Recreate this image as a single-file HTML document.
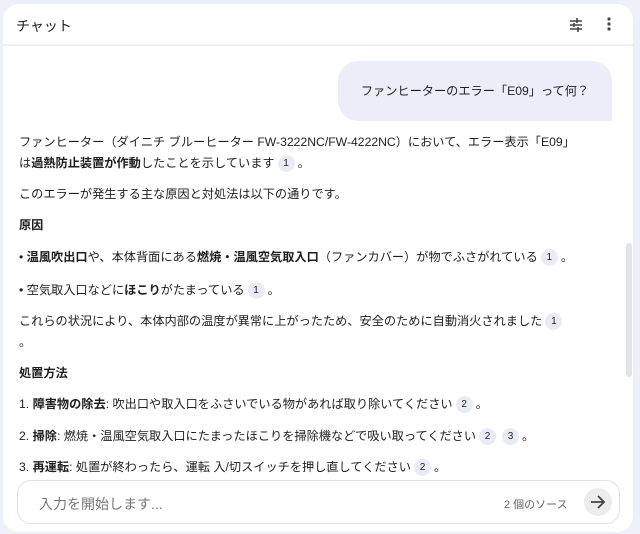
<!DOCTYPE html>
<html><head><meta charset="utf-8"><style>
*{margin:0;padding:0;box-sizing:border-box}
body{width:640px;height:534px;background:#eef0f9;font-family:"Liberation Sans","Noto Sans CJK JP",sans-serif;color:#1f1f1f;position:relative;overflow:hidden}
.card{position:absolute;left:3px;top:4px;width:630px;height:528px;background:#fff;border-radius:16px;overflow:hidden}
.hdr{position:absolute;left:0;top:0;width:630px;height:42px;border-bottom:2px solid #eef0f6}
.t{position:absolute;left:13px;top:12px;font-size:14px;color:#1f1f1f}
.l{position:absolute;left:16px;font-size:12.2px;white-space:nowrap;line-height:18px}
b{font-weight:bold}
.c{display:inline-block;width:17px;height:17px;border-radius:50%;background:#e9ebf6;font-size:10px;text-align:center;line-height:17px;margin:0 3px;vertical-align:middle}
.bub{position:absolute;left:335px;top:57px;width:274px;height:60px;background:#ecedf8;border-radius:20px 20px 0 20px;font-size:12.2px;line-height:60px;text-align:center}
.sb{position:absolute;left:623px;top:239px;width:6px;height:134px;border-radius:3px;background:#e1e3ea}
.inp{position:absolute;left:14px;top:476px;width:603px;height:44px;border:1px solid #dfe1e8;border-radius:14px;background:#fff}
</style></head><body>
<div class="card">
<div class="hdr"><div class="t">チャット</div>
<svg style="position:absolute;left:565px;top:13px" width="16" height="16" viewBox="0 0 16 16"><g stroke="#444" stroke-width="1.6"><line x1="2" y1="4" x2="14" y2="4"/><line x1="2" y1="8" x2="14" y2="8"/><line x1="2" y1="12" x2="14" y2="12"/><line x1="9" y1="1" x2="9" y2="6"/><line x1="6" y1="6" x2="6" y2="10"/><line x1="10" y1="10" x2="10" y2="15"/></g></svg>
<svg style="position:absolute;left:604px;top:12px" width="4" height="16"><circle cx="2" cy="3" r="1.6" fill="#444"/><circle cx="2" cy="8" r="1.6" fill="#444"/><circle cx="2" cy="13" r="1.6" fill="#444"/></svg>
</div>
<div class="bub">ファンヒーターのエラー「E09」って何？</div>
<div class="l" style="top:129px">ファンヒーター（ダイニチ ブルーヒーター FW-3222NC/FW-4222NC）において、エラー表示「E09」</div>
<div class="l" style="top:150px">は<b>過熱防止装置が作動</b>したことを示しています<span class="c">1</span>。</div>
<div class="l" style="top:181px">このエラーが発生する主な原因と対処法は以下の通りです。</div>
<div class="l" style="top:212px"><b>原因</b></div>
<div class="l" style="top:244px">• <b>温風吹出口</b>や、本体背面にある<b>燃焼・温風空気取入口</b>（ファンカバー）が物でふさがれている<span class="c">1</span>。</div>
<div class="l" style="top:277px">• 空気取入口などに<b>ほこり</b>がたまっている<span class="c">1</span>。</div>
<div class="l" style="top:308px">これらの状況により、本体内部の温度が異常に上がったため、安全のために自動消火されました<span class="c">1</span></div>
<div class="l" style="top:329px">。</div>
<div class="l" style="top:360px"><b>処置方法</b></div>
<div class="l" style="top:391px">1. <b>障害物の除去</b>: 吹出口や取入口をふさいでいる物があれば取り除いてください<span class="c">2</span>。</div>
<div class="l" style="top:423px">2. <b>掃除</b>: 燃焼・温風空気取入口にたまったほこりを掃除機などで吸い取ってください<span class="c">2</span><span class="c">3</span>。</div>
<div class="l" style="top:454px">3. <b>再運転</b>: 処置が終わったら、運転 入/切スイッチを押し直してください<span class="c">2</span>。</div>
<div class="sb"></div>
<div class="inp">
<div style="position:absolute;left:21px;top:13px;font-size:14px;color:#777">入力を開始します...</div>
<div style="position:absolute;left:486px;top:15px;font-size:11px;color:#666">2 個のソース</div>
<div style="position:absolute;left:566px;top:7px;width:28px;height:28px;border-radius:50%;background:#ececec"><svg width="28" height="28" viewBox="0 0 28 28"><path d="M7 14h13M14 8l6 6-6 6" stroke="#444" stroke-width="1.8" fill="none"/></svg></div>
</div>
</div>
</body></html>
